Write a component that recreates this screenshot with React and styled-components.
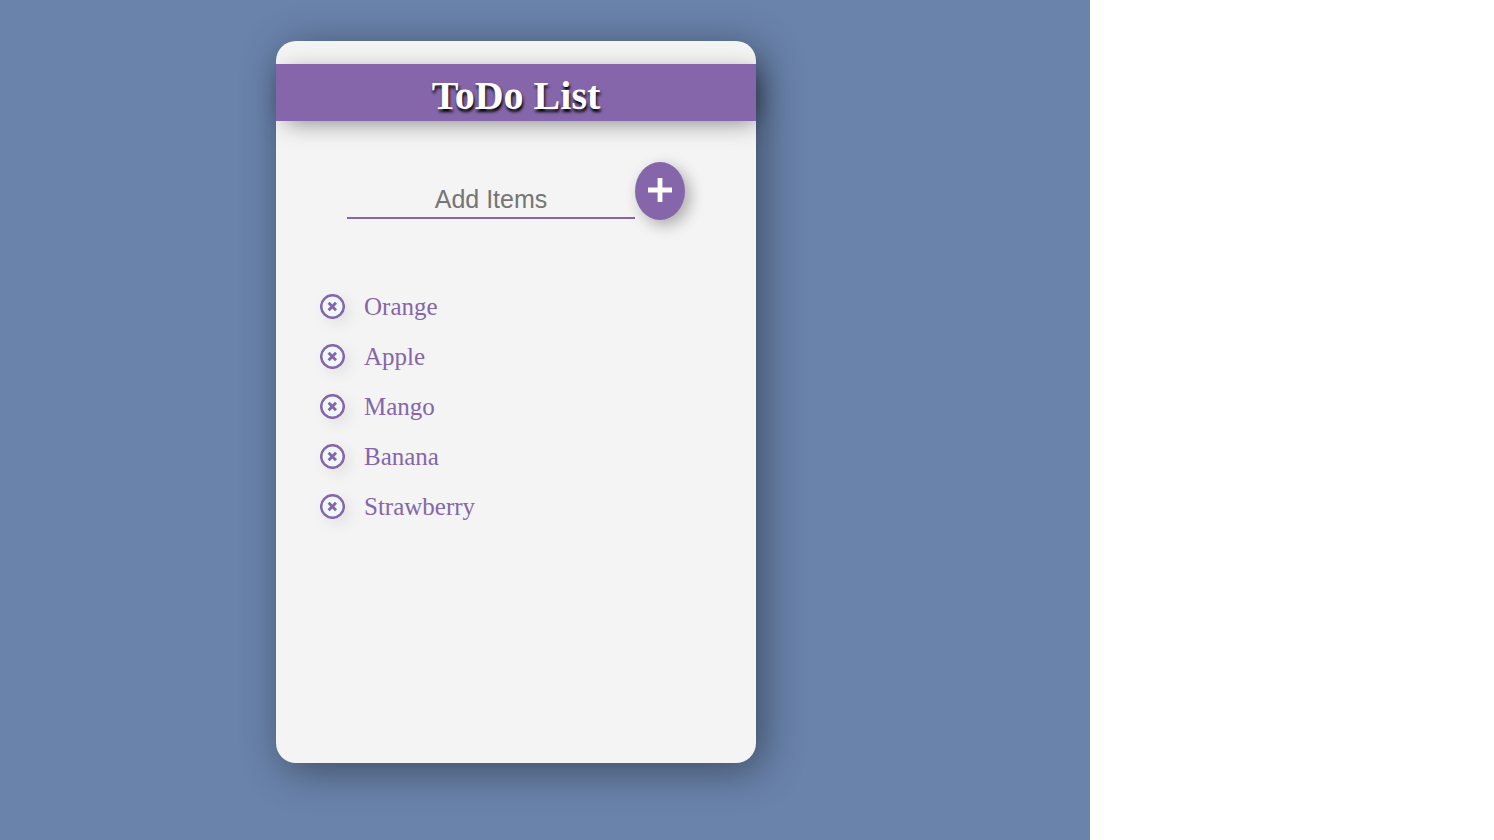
import React, { useState } from "react";
import styled, { createGlobalStyle } from "styled-components";

const purple = "#8566aa";
const serif = '"Liberation Serif", "Times New Roman", serif';
const sans = '"Liberation Sans", Arial, sans-serif';

const GlobalStyle = createGlobalStyle`
  *, *::before, *::after { box-sizing: border-box; }
  body { margin: 0; background: #fff; font-family: ${serif}; }
`;

const Page = styled.div`
  display: grid;
  grid-template-columns: 1090fr 404fr;
  min-height: 100vh;
`;

const Backdrop = styled.main`
  display: flex;
  justify-content: center;
  align-items: flex-start;
  padding: 41px 58px 41px 0;
  background: #6a83ab;
  overflow: hidden;
`;

const Card = styled.section`
  width: 100%;
  max-width: 480px;
  min-height: 722px;
  padding-top: 23px;
  border-radius: 20px;
  background: #f4f4f4;
  box-shadow: 7px 7px 40px rgba(0, 0, 0, 0.42);
`;

const Title = styled.h1`
  margin: 0;
  padding-top: 9px;
  height: 57px;
  background: ${purple};
  color: #fff;
  font-size: 40px;
  line-height: 46px;
  font-weight: 700;
  text-align: center;
  text-shadow: 1px 3px 3px #000;
  box-shadow: 5px 5px 25px -5px rgba(0, 0, 0, 0.5);
`;

const AddForm = styled.form`
  display: flex;
  justify-content: center;
  align-items: flex-end;
  margin-top: 41px;
`;

const ItemInput = styled.input`
  width: 60%;
  height: 40px;
  margin-bottom: 1px;
  padding: 2px 0 0;
  border: 0;
  border-bottom: 2px solid ${purple};
  outline: none;
  background: transparent;
  color: ${purple};
  font-family: ${sans};
  font-size: 25px;
  text-align: center;

  &::placeholder { color: #757575; opacity: 1; }
`;

const AddButton = styled.button`
  display: flex;
  align-items: center;
  justify-content: center;
  width: 50px;
  height: 58px;
  padding: 0 0 2px;
  border: 0;
  border-radius: 50%;
  background: ${purple};
  color: #fff;
  cursor: pointer;
  box-shadow: 5px 5px 15px rgba(0, 0, 0, 0.3);
`;

const List = styled.ul`
  margin: 62px 0 0;
  padding: 0 44px;
  list-style: none;
`;

const Item = styled.li`
  display: flex;
  align-items: center;
  gap: 19px;
  height: 50px;
  color: ${purple};
  font-size: 25px;
  line-height: 28px;
`;

const RemoveButton = styled.button`
  display: flex;
  width: 25px;
  height: 25px;
  margin-bottom: 1px;
  padding: 0;
  border: 0;
  border-radius: 50%;
  background: aliceblue;
  color: ${purple};
  cursor: pointer;
  box-shadow: 5px 5px 15px rgba(0, 0, 0, 0.08);
`;

function PlusIcon() {
  return (
    <svg width="26" height="26" viewBox="0 0 26 26" aria-hidden="true">
      <path d="M1 13H25M13 1V25" stroke="currentColor" strokeWidth="4.8" />
    </svg>
  );
}

function CrossIcon() {
  return (
    <svg width="25" height="25" viewBox="0 0 25 25" fill="none" stroke="currentColor" aria-hidden="true">
      <circle cx="12.5" cy="12.5" r="11.3" strokeWidth="2.5" />
      <path d="M8.6 8.8L16 16.2M16 8.8L8.6 16.2" strokeWidth="2.9" />
    </svg>
  );
}

export default function App() {
  const [items, setItems] = useState(["Orange", "Apple", "Mango", "Banana", "Strawberry"]);
  const [text, setText] = useState("");

  const addItem = (event) => {
    event.preventDefault();
    if (!text.trim()) return;
    setItems([...items, text.trim()]);
    setText("");
  };

  return (
    <Page>
      <GlobalStyle />
      <Backdrop>
        <Card>
          <Title>ToDo List</Title>
          <AddForm onSubmit={addItem}>
            <ItemInput
              type="text"
              aria-label="Add Items"
              placeholder="Add Items"
              value={text}
              onChange={(event) => setText(event.target.value)}
            />
            <AddButton type="submit" aria-label="Add">
              <PlusIcon />
            </AddButton>
          </AddForm>
          <List>
            {items.map((item, index) => (
              <Item key={index}>
                <RemoveButton
                  type="button"
                  aria-label={`Remove ${item}`}
                  onClick={() => setItems(items.filter((_, i) => i !== index))}
                >
                  <CrossIcon />
                </RemoveButton>
                <span>{item}</span>
              </Item>
            ))}
          </List>
        </Card>
      </Backdrop>
    </Page>
  );
}
